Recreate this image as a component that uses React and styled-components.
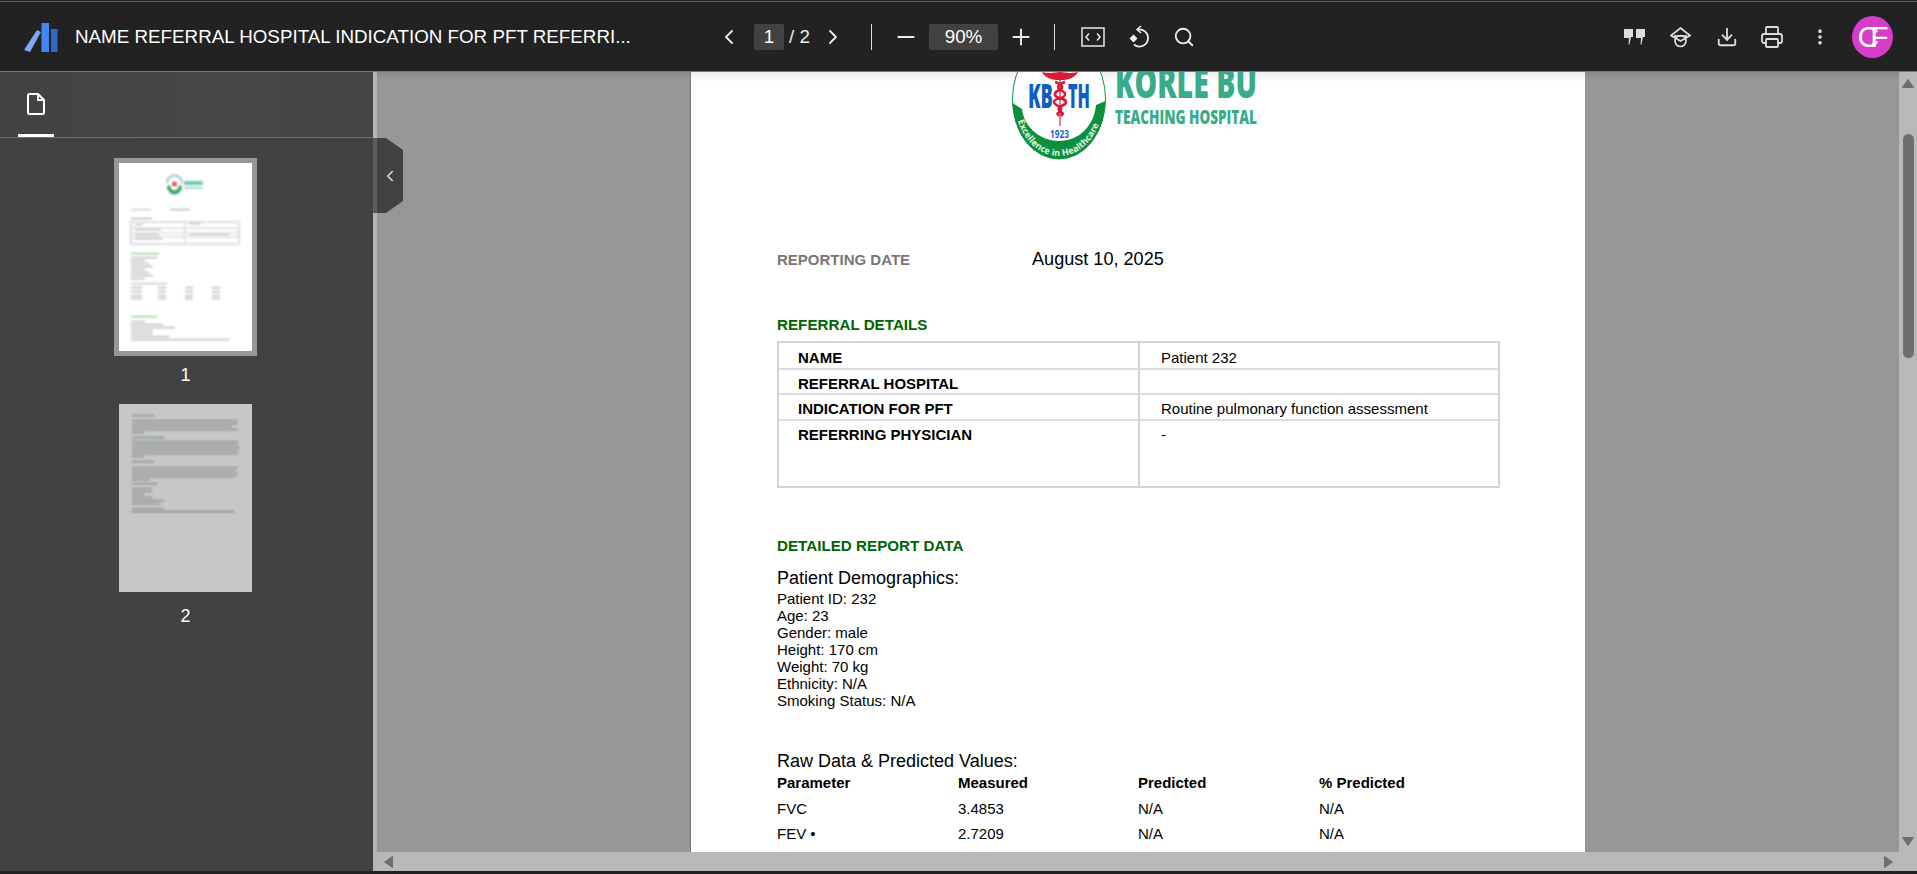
import React from 'react';
import styled, { createGlobalStyle } from 'styled-components';
import { ChevronLeft, ChevronRight, Minus, Plus, Search, Download, Printer, MoreVertical } from 'lucide-react';

const Global = createGlobalStyle`
  html, body { margin: 0; padding: 0; height: 100%; overflow: hidden; background: #222; }
  #root { height: 100%; }
  * { box-sizing: border-box; }
`;
const Shell = styled.div`
  width: 1917px; height: 874px; display: flex; flex-direction: column; overflow: hidden;
  background: #222; font-family: "Liberation Sans", Arial, sans-serif;
`;
const Toolbar = styled.header`
  height: 72px; flex: none; display: flex; align-items: center; background: #222; padding-top: 2px;
  border-top: 1px solid #222; border-bottom: 1px solid #777; box-shadow: inset 0 1px 0 #666; position: relative; z-index: 3;
`;
const Brand = styled.div`width: 691px; flex: none; display: flex; align-items: center; padding-left: 24px; gap: 16px;`;
const Title = styled.div`color: #fff; font-size: 18.8px; white-space: nowrap;`;
const Controls = styled.div`display: flex; align-items: center; height: 26px; color: #eee; margin-left: 26px;`;
const IconSlot = styled.span`display: flex; align-items: center; justify-content: center; width: ${p => p.$w}px; margin-left: ${p => p.$ml || 0}px; flex: none; color: ${p => p.$c || '#eee'};`;
const FieldBox = styled.span`
  width: ${p => p.$w}px; height: 26px; background: #424242; color: #fff; display: flex; align-items: center; justify-content: center;
  font-size: 18.8px; margin-left: ${p => p.$ml || 0}px; border-radius: 2px; flex: none;
`;
const PageTotal = styled.span`color: #eee; font-size: 18.8px; margin-left: 5px; width: 27px; white-space: nowrap;`;
const Divider = styled.span`width: 1px; height: 26px; background: #ddd; margin-left: ${p => p.$ml}px; flex: none;`;
const Actions = styled.div`display: flex; align-items: center; margin-left: auto; padding-right: 24px;`;
const Avatar = styled.div`
  width: 41px; height: 42px; border-radius: 50%; background: #d63ec9; color: #fff; margin-left: 22px;
  display: flex; align-items: center; justify-content: center; font-size: 30px; letter-spacing: -9px; padding-right: 8px; overflow: hidden;
`;
const Body = styled.div`flex: 1; min-height: 0; display: flex; position: relative;`;
const Sidebar = styled.aside`width: 373px; flex: none; background: #424242; display: flex; flex-direction: column; align-items: stretch;`;
const Tabs = styled.div`height: 66px; flex: none; border-bottom: 1px solid #6e6e6e; padding-left: 18px; background: linear-gradient(90deg,#424242,#474747 60%,#444);`;
const Tab = styled.div`
  width: 36px; height: 65px; border-bottom: 3px solid #fff; display: flex; justify-content: center; padding-top: 21px;
`;
const Thumbs = styled.div`flex: 1; display: flex; flex-direction: column; align-items: center; padding-top: 20px; padding-right: 2px;`;
const ThumbFrame = styled.div`
  width: ${p => p.$active ? 143 : 133}px; height: ${p => p.$active ? 198 : 188}px; border: ${p => p.$active ? '5px solid #979797' : 'none'};
  background: #fff; flex: none; overflow: hidden; position: relative; display: flex;
`;
const ThumbLabel = styled.div`color: #fff; font-size: 18px; line-height: 22px; margin-top: ${p => p.$mt}px; margin-bottom: 15px; text-align: center; height: 26px; padding-top: 1px;`;
const Shade = styled.div`position: absolute; inset: 0; background: rgba(0,0,0,.22);`;
const Splitter = styled.div`width: 4px; flex: none; background: #b5b5b5;`;
const Handle = styled.div`
  position: absolute; left: 373px; top: 66px; width: 30px; height: 76px; background: #424242; color: #ddd; z-index: 2;
  clip-path: polygon(0 0, 13px 0, 30px 12px, 30px 63px, 13px 75px, 0 75px); display: flex; align-items: center; justify-content: center; padding-left: 3px;
`;
const HandleEdge = styled.span`position: absolute; left: 0; top: 0; bottom: 1px; width: 4px; background: #5c5c5c;`;
const Viewer = styled.div`flex: 1; min-width: 0; display: flex; flex-direction: column;`;
const ViewerRow = styled.div`flex: 1; min-height: 0; display: flex;`;
const Viewport = styled.main`
  flex: 1; min-width: 0; background: #979797; overflow: hidden; padding-left: 314px; position: relative;
  box-shadow: inset 0 8px 8px -8px rgba(0,0,0,.18);
`;
const VBar = styled.div`width: 18px; flex: none; background: #b8b8b8; display: flex; flex-direction: column; align-items: center; padding-top: 5px; position: relative;`;
const VThumb = styled.div`width: 11px; height: 224px; background: #6e6e6e; border-radius: 5.5px; margin-top: 43px; flex: none;`;
const ArrowEnd = styled.div`margin-top: auto; margin-bottom: 4px; display: flex;`;
const HRow = styled.div`height: 19px; flex: none; display: flex; align-items: center; justify-content: space-between; background: #b8b8b8; padding: 0 23px 0 6px;`;
const BottomStrip = styled.div`height: 3px; flex: none; background: #222;`;
const Page = styled.article`
  width: 894px; height: 1200px; background: #fff; margin-top: -30px; padding: 0 85px 0 86px; color: #000; box-shadow: -1px 0 0 #777;
  font-size: 15px; line-height: 17px; position: relative;
`;
const PageShade = styled.div`position: absolute; left: 0; right: 0; top: 30px; height: 10px; background: linear-gradient(#eee, #fff);`;
const LogoWrap = styled.div`height: 130px; padding-left: 235px; position: relative;`;
const DateRow = styled.div`display: flex; align-items: center; margin-top: 77px; height: 20px;`;
const DateLabel = styled.span`width: 255px; color: #777; font-weight: 700; font-size: 15px;`;
const DateValue = styled.span`font-size: 18.1px;`;
const SectionTitle = styled.h2`margin: ${p => p.$mt}px 0 0; color: #006400; font-size: 15.2px; line-height: 17px; font-weight: 700;`;
const DetailTable = styled.div`
  margin-top: 8px; width: 723px; display: grid; grid-template-columns: 359px 1fr; grid-template-rows: 25px 25px 26px 67px;
  border: 2px solid #d4d4d4; background: #fff;
`;
const Cell = styled.div`
  padding: ${p => p.$first ? 6 : 5}px 0 0 ${p => p.$val ? 21 : 19}px; font-weight: ${p => p.$val ? 400 : 700}; line-height: 17px;
  border-left: ${p => p.$val ? '2px solid #d4d4d4' : 'none'}; border-top: ${p => p.$first ? 'none' : '2px solid #dcdcdc'};
`;
const Heading = styled.h3`margin: ${p => p.$mt}px 0 0; font-size: 18px; line-height: 23px; font-weight: 400;`;
const InfoLine = styled.div`height: 17px; white-space: nowrap;`;
const RawGrid = styled.div`display: grid; grid-template-columns: 181px 180px 181px 1fr; margin-top: 0;`;
const RawHead = styled.div`font-weight: 700; height: 23px; line-height: 19px; font-size: 15px;`;
const RawCell = styled.div`height: 25px; line-height: 25px;`;

const Brandmark = () => (
  <svg width="35" height="30" viewBox="0 0 35 30" style={{ flex: 'none' }}>
    <path d="M13 8l4 2L6 30 0 28z" fill="#7baaf7" />
    <rect x="17.500" y="1" width="7.500" height="29" fill="#4285f4" />
    <rect x="27" y="7" width="6.500" height="23" fill="#3367c6" />
  </svg>
);
const FitIcon = () => (
  <svg width="24" height="20" viewBox="0 0 24 20" fill="none" stroke="#eee">
    <rect x="1" y="1" width="22" height="18" strokeWidth="1.6" stroke="#ddd" />
    <path d="M8 6.500 5 10l3 3.500M16 6.500l3 3.500-3 3.500" strokeWidth="1.500" />
  </svg>
);
const RotateIcon = () => (
  <svg width="22" height="24" viewBox="0 0 22 24" fill="none">
    <path d="M13 1 9 4.500 13 8" stroke="#eee" strokeWidth="1.500" />
    <path d="M9.500 4.500c6.500-.5 10.500 3.500 10.500 8.500a8.500 8.500 0 0 1-14 6.500" stroke="#eee" strokeWidth="1.800" />
    <path d="M5.500 9.500 9.500 13.500 5.500 17.500 1.500 13.500z" fill="#eee" />
  </svg>
);
const QuoteIcon = () => (
  <svg width="21" height="16" viewBox="0 0 21 16" fill="#ddd">
    <path d="M0 0h9v8H7L5.500 15.500h-1L5 9H0zM12 0h9v8h-2l-1.500 7.500h-1L17 9h-5z" />
  </svg>
);
const CapIcon = () => (
  <svg width="21" height="21" viewBox="0 0 21 21" fill="none" stroke="#ddd" strokeWidth="1.700">
    <path d="M10.500 1 20 8.500 10.500 14 1 8.500z" />
    <path d="M4 9h13" />
    <circle cx="10.500" cy="14" r="5.500" />
  </svg>
);
const DocIcon = () => (
  <svg width="18" height="22" viewBox="0 0 18 22" fill="none" stroke="#fff" strokeWidth="2">
    <path d="M2.500 1H11l6 6v12.500a1.500 1.500 0 0 1-1.500 1.500h-13A1.500 1.500 0 0 1 1 19.500v-17A1.500 1.500 0 0 1 2.500 1z" strokeLinejoin="round" />
    <path d="M11 1v6h6" />
  </svg>
);
const Tri = ({ d }) => {
  const pts = { up: '1.500,10.500 12.500,10.500 7,2.500', down: '1.500,3.500 12.500,3.500 7,11.500', left: '9.500,1.500 9.500,12.500 1.500,7', right: '4.500,1.500 4.500,12.500 12.500,7' }[d];
  return <svg width="14" height="14" viewBox="0 0 14 14"><polygon points={pts} fill="#6e6e6e" stroke="#6e6e6e" strokeWidth="1" strokeLinejoin="round" /></svg>;
};
const OS = 'Open Sans, sans-serif';
const HospitalLogo = () => (
  <svg width="262" height="130" viewBox="0 0 262 130" fill="none">
    <defs>
      <path id="motto" d="M4 72 C 10 99 28 114 47 114 C 66 114 84 99 90 72" />
    </defs>
    <ellipse cx="47" cy="57" rx="46.500" ry="60" fill="#fff" stroke="#17943f" strokeWidth="1" />
    <path d="M0.500 61 C 2 96 24 117 47 117 C 70 117 92 96 93.500 59 L 84 63 C 82 85 66 99 47 99 C 28 99 12 85 10 67 Z" fill="#0d8f3c" />
    <text fontFamily={OS} fontSize="9" fontWeight="700" fill="#e6f5e9"><textPath href="#motto" startOffset="7" textLength="112" lengthAdjust="spacing">Excellence in Healthcare</textPath></text>
    <text x="47.500" y="96" textAnchor="middle" fontFamily={OS} fontSize="10" fontWeight="700" fill="#1565c8" textLength="19" lengthAdjust="spacingAndGlyphs">1923</text>
    <text x="16" y="66" fontFamily={OS} fontSize="34" fontWeight="800" fill="#0b5fc4" textLength="25" lengthAdjust="spacingAndGlyphs">KB</text>
    <text x="56" y="66" fontFamily={OS} fontSize="34" fontWeight="800" fill="#0b5fc4" textLength="22" lengthAdjust="spacingAndGlyphs">TH</text>
    <path d="M48 30v54" stroke="#d91b36" strokeWidth="1.200" />
    <path d="M30 30c9 2 13 0 18 0s9 2 18 0c-2 5-10 8-14 8h-8c-4 0-12-3-14-8z" fill="#d91b36" />
    <path d="M43 40c7 2 8 5 6 7s-7 2-6 6 11 3 11 7-9 4-7 8 6 2 2 6" stroke="#d91b36" strokeWidth="2.800" />
    <path d="M53 40c-7 2-8 5-6 7s7 2 6 6-11 3-11 7 9 4 7 8-6 2-2 6" stroke="#d91b36" strokeWidth="2.400" />
    <text x="103" y="56" fontFamily={OS} fontSize="42" fontWeight="800" fill="#38ab8b" textLength="142" lengthAdjust="spacingAndGlyphs">KORLE BU</text>
    <text x="103" y="82" fontFamily={OS} fontSize="20" fontWeight="800" fill="#38ab8b" textLength="142" lengthAdjust="spacingAndGlyphs">TEACHING HOSPITAL</text>
  </svg>
);
const line = (x, y, w, c = '#555', h = 1.2) => <rect key={`${x}-${y}-${w}`} x={x} y={y} width={w} height={h} fill={c} opacity=".5" />;
const Thumb1 = () => (
  <svg width="133" height="188" viewBox="0 0 133 188">
    <defs><filter id="b1"><feGaussianBlur stdDeviation=".8" /></filter></defs>
    <g filter="url(#b1)">
      <path d="M48 20a7.500 7.500 0 0 1 15 0" fill="none" stroke="#8fc7c0" strokeWidth="2" />
      <path d="M48 23a7.500 8.500 0 0 0 15 0l-3-1a4 5 0 0 1-9 0z" fill="#2aa05a" /><circle cx="55.500" cy="21" r="2.500" fill="#d84a5a" />
      <rect x="65" y="18" width="19" height="4" fill="#38ab8b" opacity=".7" /><rect x="65" y="24" width="19" height="1.500" fill="#38ab8b" opacity=".6" />
      {line(12, 46, 20, '#888')}{line(51, 46, 20)}
      {line(12, 55, 21, '#0a7a0a')}
      <rect x="12" y="59" width="108" height="22" fill="none" stroke="#ddd" strokeWidth="2" />
      <path d="M12 65h108M12 70h108M12 74h108M66 59v22" stroke="#ddd" strokeWidth="1.500" />
      {line(16, 61, 8, '#333')}{line(70, 60, 12)}{line(16, 66, 26, '#333')}{line(16, 71, 24, '#333')}{line(70, 71, 40)}{line(16, 75, 27, '#333')}
      {line(12, 90, 28, '#0a7a0a')}
      {line(12, 94, 26)}{[97, 100, 103, 106, 109, 112, 115].map((y, i) => line(12, y, 14 + (i % 3) * 4))}
      {line(12, 120, 36, '#777')}
      {[124, 128, 132, 135].map((y) => [12, 39, 66, 93].map((x) => line(x, y, x === 12 ? 11 : 8)))}
      {line(12, 153, 26, '#0a7a0a')}
      {[158, 161, 164, 167, 170, 173].map((y, i) => line(12, y, [14, 32, 44, 22, 21, 38][i]))}
      {line(12, 176, 98)}
    </g>
  </svg>
);
const Thumb2 = () => (
  <svg width="133" height="188" viewBox="0 0 133 188">
    <defs><filter id="b2"><feGaussianBlur stdDeviation=".8" /></filter></defs>
    <g filter="url(#b2)">
      {line(13, 11, 22, '#1f7a1f')}
      {[16, 19, 22, 25, 28].map((y, i) => line(13, y, [106, 106, 100, 106, 12][i]))}
      {line(13, 33, 32, '#1f7a1f')}
      {[37, 40, 43, 46, 49, 52].map((y, i) => line(13, y, [106, 106, 108, 106, 106, 12][i]))}
      {line(13, 57, 22, '#1f7a1f')}
      {[63, 66, 69, 72, 75].map((y, i) => line(13, y, [106, 104, 106, 104, 18][i]))}
      {line(13, 79, 25, '#1f7a1f')}
      {[84, 87, 90, 93, 96].map((y, i) => line(13, y, [20, 20, 12, 20, 32][i]))}
      {line(13, 99, 28, '#1f7a1f')}
      {line(13, 104, 32)}{line(13, 107, 102, '#333')}
    </g>
  </svg>
);

export default function App() {
  const info = ['Patient ID: 232', 'Age: 23', 'Gender: male', 'Height: 170 cm', 'Weight: 70 kg', 'Ethnicity: N/A', 'Smoking Status: N/A'];
  const rows = [['NAME', 'Patient 232'], ['REFERRAL HOSPITAL', ''], ['INDICATION FOR PFT', 'Routine pulmonary function assessment'], ['REFERRING PHYSICIAN', '-']];
  return (
    <Shell>
      <Global />
      <Toolbar>
        <Brand>
          <Brandmark />
          <Title>NAME REFERRAL HOSPITAL INDICATION FOR PFT REFERRI...</Title>
        </Brand>
        <Controls>
          <IconSlot $w={24}><ChevronLeft size={32} strokeWidth={1.8} /></IconSlot>
          <FieldBox $w={30} $ml={13}>1</FieldBox>
          <PageTotal>/ 2</PageTotal>
          <IconSlot $w={24} $ml={5}><ChevronRight size={32} strokeWidth={1.8} /></IconSlot>
          <Divider $ml={26} />
          <IconSlot $w={26} $ml={21}><Minus size={30} strokeWidth={2} /></IconSlot>
          <FieldBox $w={69} $ml={10}>90%</FieldBox>
          <IconSlot $w={26} $ml={10}><Plus size={30} strokeWidth={1.800} /></IconSlot>
          <Divider $ml={20} />
          <IconSlot $w={24} $ml={26}><FitIcon /></IconSlot>
          <IconSlot $w={24} $ml={22}><RotateIcon /></IconSlot>
          <IconSlot $w={22} $ml={22}><Search size={22} strokeWidth={2} /></IconSlot>
        </Controls>
        <Actions>
          <IconSlot $w={21}><QuoteIcon /></IconSlot>
          <IconSlot $w={21} $ml={25}><CapIcon /></IconSlot>
          <IconSlot $w={22} $ml={25} $c="#ddd"><Download size={22} strokeWidth={2} /></IconSlot>
          <IconSlot $w={24} $ml={22} $c="#ddd"><Printer size={24} strokeWidth={1.800} /></IconSlot>
          <IconSlot $w={20} $ml={26} $c="#ddd"><MoreVertical size={22} strokeWidth={2.400} /></IconSlot>
          <Avatar>CF</Avatar>
        </Actions>
      </Toolbar>
      <Body>
        <Sidebar>
          <Tabs><Tab><DocIcon /></Tab></Tabs>
          <Thumbs>
            <ThumbFrame $active><Thumb1 /></ThumbFrame>
            <ThumbLabel $mt={7}>1</ThumbLabel>
            <ThumbFrame><Thumb2 /><Shade /></ThumbFrame>
            <ThumbLabel $mt={12}>2</ThumbLabel>
          </Thumbs>
        </Sidebar>
        <Splitter />
        <Handle><HandleEdge /><ChevronLeft size={18} strokeWidth={2} /></Handle>
        <Viewer>
          <ViewerRow>
            <Viewport>
              <Page>
                <PageShade />
                <LogoWrap><HospitalLogo /></LogoWrap>
                <DateRow><DateLabel>REPORTING DATE</DateLabel><DateValue>August 10, 2025</DateValue></DateRow>
                <SectionTitle $mt={47}>REFERRAL DETAILS</SectionTitle>
                <DetailTable>
                  {rows.map(([k, v], i) => (
                    <React.Fragment key={k}>
                      <Cell $first={i === 0}>{k}</Cell>
                      <Cell $val $first={i === 0}>{v}</Cell>
                    </React.Fragment>
                  ))}
                </DetailTable>
                <SectionTitle $mt={49}>DETAILED REPORT DATA</SectionTitle>
                <Heading $mt={13}>Patient Demographics:</Heading>
                {info.map((t) => <InfoLine key={t}>{t}</InfoLine>)}
                <Heading $mt={41}>Raw Data &amp; Predicted Values:</Heading>
                <RawGrid>
                  {['Parameter', 'Measured', 'Predicted', '% Predicted'].map((t) => <RawHead key={t}>{t}</RawHead>)}
                  {['FVC', '3.4853', 'N/A', 'N/A', 'FEV •', '2.7209', 'N/A', 'N/A'].map((t, i) => <RawCell key={i}>{t}</RawCell>)}
                </RawGrid>
              </Page>
            </Viewport>
            <VBar>
              <Tri d="up" />
              <VThumb />
              <ArrowEnd><Tri d="down" /></ArrowEnd>
            </VBar>
          </ViewerRow>
          <HRow>
            <Tri d="left" />
            <Tri d="right" />
          </HRow>
        </Viewer>
      </Body>
      <BottomStrip />
    </Shell>
  );
}
